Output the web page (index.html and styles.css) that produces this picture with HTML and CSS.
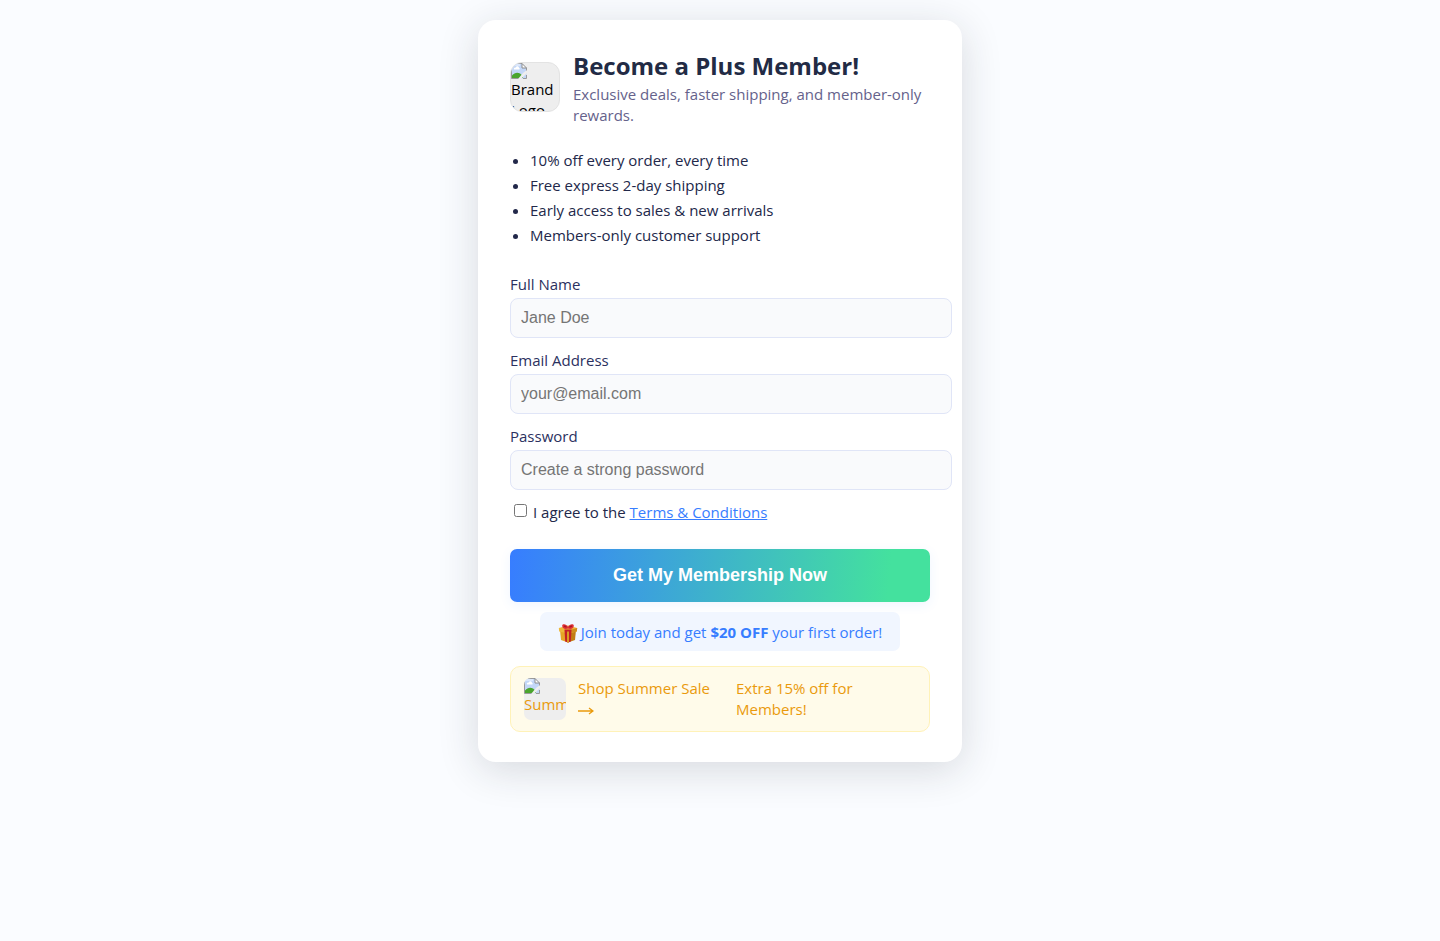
FILE: index.html
```html
<!DOCTYPE html>
<html lang="en">
<head>
<meta charset="utf-8">
<meta name="viewport" content="width=device-width, initial-scale=1">
<title>Become a Plus Member!</title>
<link rel="stylesheet" href="styles.css">
</head>
<body>
<svg class="defs" width="0" height="0" aria-hidden="true">
  <symbol id="missing" viewBox="0 0 16 16">
    <path d="M.5 .5H11L15.500 5V15.500H.5Z" fill="#c3d7f7"/>
    <path d="M1 3H9V1H1Z" fill="#dbe7fb"/>
    <path d="M3 6.500C2.200 4.700 4.200 4 4.800 4.600C5.500 2.600 8 3.200 8 5C9 5 9.200 6.500 8 6.500Z" fill="#fff"/>
    <path d="M1 15V12.500C3.500 9.500 6.500 9 9 10.500L12 13V15Z" fill="#4aa52e"/>
    <path d="M16 7V10L10 16H7L12 10Z" fill="#eee"/>
    <path d="M.5 15.500V.5H11M15.500 5V7.500M.5 15.500H7.500M12 15.500H15.500V12" fill="none" stroke="#9a9a9a"/>
    <path d="M11 .5V5H15.500Z" fill="#fff" stroke="#8c8c8c"/>
  </symbol>
</svg>
<main class="card">
  <header class="head">
    <div class="thumb logo"><svg class="missing" role="img" aria-label="Missing image"><use href="#missing"/></svg><span>Brand Logo</span></div>
    <div class="intro">
      <h1>Become a Plus Member!</h1>
      <p>Exclusive deals, faster shipping, and member-only rewards.</p>
    </div>
  </header>
  <ul class="perks">
    <li>10% off every order, every time</li>
    <li>Free express 2-day shipping</li>
    <li>Early access to sales &amp; new arrivals</li>
    <li>Members-only customer support</li>
  </ul>
  <form>
    <label class="label" for="name">Full Name</label>
    <input class="field" id="name" type="text" placeholder="Jane Doe">
    <label class="label" for="email">Email Address</label>
    <input class="field" id="email" type="email" placeholder="your@email.com">
    <label class="label" for="password">Password</label>
    <input class="field" id="password" type="password" placeholder="Create a strong password">
    <div class="agree">
      <input class="check" id="agree" type="checkbox">
      <label for="agree">I agree to the <a href="#terms">Terms &amp; Conditions</a></label>
    </div>
    <button class="submit" type="submit">Get My Membership Now</button>
  </form>
  <div class="offer">
    <svg class="gift" viewBox="0 0 20 20" aria-hidden="true">
      <path d="M2 7L10 9V19.500L3 17Z" fill="#e5a526"/>
      <path d="M18 7L10 9V19.500L17 17Z" fill="#c17c12"/>
      <path d="M.8 5L10 2.500L19.200 5L18.800 8.500L10 10.500L1.200 8.500Z" fill="#edb73a"/>
      <path d="M10 7.500L19.200 5L18.800 8.500L10 10.500Z" fill="#cf8c1b"/>
      <path d="M6.500 6.500L13.500 6.500L12.800 18.500L10 19.500L7.200 18.500Z" fill="#c41f25"/>
      <path d="M9 8.500L11 8.500L11 19.300L10 19.500L9 19.300Z" fill="#d99a22"/>
      <path d="M10 5.500C7 6.500 4 5.500 4.200 2.500C4.300 .5 8.500 .5 10 4C11.500 .5 15.700 .5 15.800 2.500C16 5.500 13 6.500 10 5.500Z" fill="#df3038"/>
      <path d="M5.800 3C6.500 2 8.500 3 9 4.300C7.500 4.700 6 4.300 5.800 3ZM14.200 3C13.500 2 11.500 3 11 4.300C12.500 4.700 14 4.300 14.200 3Z" fill="#a81820"/>
    </svg>
    <span>Join today and get <strong>$20 OFF</strong> your first order!</span>
  </div>
  <a class="sale" href="#sale">
    <span class="thumb banner"><svg class="missing" role="img" aria-label="Missing image"><use href="#missing"/></svg><span>Summer Sale</span></span>
    <span class="shop">Shop Summer Sale
      <svg class="arrow" viewBox="0 0 16 10" aria-label="go"><path d="M0 5H14.500M11 2L15 5L11 8" fill="none" stroke="currentColor" stroke-width="1.300"/></svg></span>
    <span class="extra">Extra 15% off for Members!</span>
  </a>
</main>
</body>
</html>
```
FILE: styles.css
```css
body {
  box-sizing: border-box;
  min-height: 100vh;
  margin: 0;
  padding: 20px;
  background: #fafcff;
  color: #22284a;
  font: 15px/21px "Segoe UI", "Open Sans", "Noto Sans", sans-serif;
}
.defs { position: absolute; }
.card {
  max-width: 420px;
  margin: 0 auto;
  padding: 28px 32px 30px;
  background: #fff;
  border-radius: 18px;
  box-shadow: 0 8px 40px rgba(34, 40, 49, 0.16);
}
.head {
  display: flex;
  align-items: center;
  gap: 13px;
  margin-bottom: 22px;
}
.thumb {
  box-sizing: border-box;
  flex: none;
  overflow: hidden;
  background: #eee;
}
.missing { display: block; width: 16px; height: 16px; }
.logo {
  width: 50px;
  height: 50px;
  border: 1px solid #e3e3e3;
  border-radius: 12px;
  color: #000;
}
.thumb span { display: block; }
h1 {
  margin: 0;
  color: #222b45;
  font-size: 24px;
  line-height: 36px;
}
.intro p { margin: 0; color: #65628b; }
.perks {
  margin: 0 0 26px;
  padding-left: 20px;
  line-height: 25px;
}
.label { display: block; margin-bottom: 3px; color: #2b3160; }
.field {
  width: 100%;
  height: 18px;
  margin: 0 0 12px;
  padding: 10px;
  border: 1px solid #e0e5f7;
  border-radius: 8px;
  background: #f9fafc;
  font: 16px/18px "Liberation Sans", Arial, sans-serif;
}
.field::placeholder { color: #757575; }
.agree {
  display: flex;
  align-items: flex-start;
  gap: 6px;
}
.check { width: 13px; height: 13px; margin: 2px 0 0 4px; }
.agree a { color: #377dff; }
.submit {
  display: block;
  width: 100%;
  margin: 26px 0 10px;
  padding: 16px;
  border: 0;
  border-radius: 7px;
  background: linear-gradient(95deg, #377dff, #44e19e 90%);
  box-shadow: 0 3px 12px rgba(55, 125, 255, 0.08);
  color: #fff;
  font: bold 18px/21px "Liberation Sans", Arial, sans-serif;
}
.offer {
  display: flex;
  justify-content: center;
  align-items: center;
  gap: 3px;
  margin: 0 30px 15px;
  padding: 10px 0 8px;
  border-radius: 7px;
  background: #f1f6ff;
  color: #377dff;
}
.gift { width: 20px; height: 20px; }
.sale {
  display: flex;
  align-items: center;
  gap: 12px;
  padding: 11px 13px;
  border: 1px solid #fff2b8;
  border-radius: 10px;
  background: #fffbea;
  color: #ea9a0c;
  text-decoration: none;
}
.banner { width: 42px; height: 42px; border-radius: 7px; white-space: nowrap; }
.shop { flex: 0 1 146px; }
.extra { flex: 1; padding-right: 40px; }
.arrow { display: block; width: 16px; height: 10px; margin: 7px 0 4px; }
```
